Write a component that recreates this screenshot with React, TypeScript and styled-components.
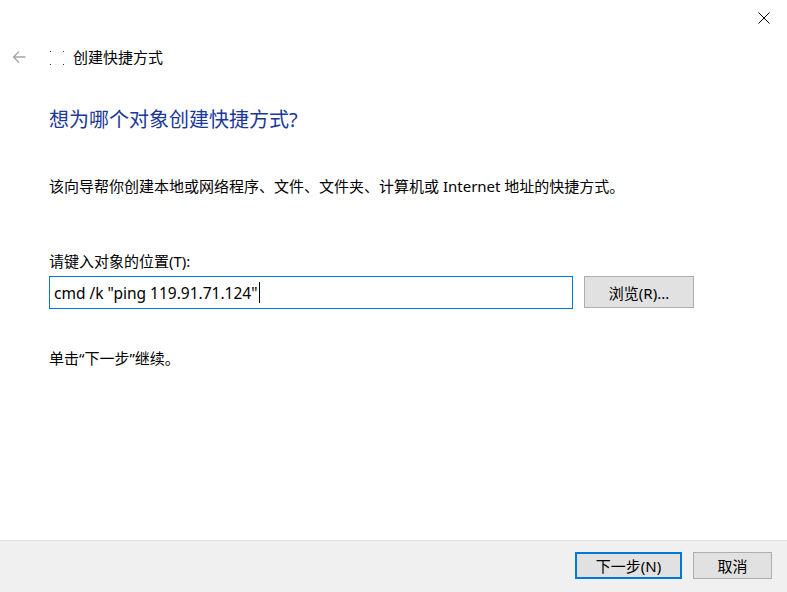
import React from "react";
import styled, { createGlobalStyle } from "styled-components";

const GlobalStyle = createGlobalStyle`
  html, body {
    margin: 0;
    padding: 0;
    background: #ffffff;
  }
  body {
    font-family: "Noto Sans", "Noto Sans CJK SC", sans-serif;
    color: #000000;
  }
`;

const Window = styled.div`
  width: 787px;
  height: 592px;
  display: flex;
  flex-direction: column;
  background: #ffffff;
  overflow: hidden;
`;

const TitleBar = styled.div`
  height: 44px;
  display: flex;
  justify-content: flex-end;
  align-items: flex-start;
`;

const CloseButton = styled.div`
  width: 46px;
  height: 36px;
  display: flex;
  align-items: center;
  justify-content: center;
`;

const NavRow = styled.div`
  height: 26px;
  display: flex;
  align-items: center;
  padding-left: 12px;
`;

const BackArrow = styled.div`
  width: 14px;
  height: 14px;
  display: flex;
  margin-right: 23px;
`;

const AppIcon = styled.div`
  width: 16px;
  height: 16px;
  margin-right: 8px;
`;

const WindowTitle = styled.span`
  font-size: 15px;
  line-height: 20px;
  color: #000000;
`;

const Content = styled.div`
  padding-left: 49px;
  display: flex;
  flex-direction: column;
  align-items: flex-start;
`;

const Heading = styled.h1`
  margin: 36px 0 0;
  font-size: 20px;
  font-weight: 400;
  line-height: 28px;
  color: #1a3799;
`;

const Text = styled.p<{ $top: number }>`
  margin: ${(p) => p.$top}px 0 0;
  font-size: 15px;
  line-height: 20px;
  color: #000000;
`;

const InputRow = styled.div`
  margin-top: 5px;
  display: flex;
  align-items: flex-start;
  gap: 11px;
`;

const Field = styled.div`
  box-sizing: border-box;
  width: 524px;
  height: 33px;
  border: 1px solid #0078d7;
  display: flex;
  align-items: center;
  padding-left: 4px;
  font-size: 15.5px;
  white-space: pre;
`;

const Caret = styled.span`
  display: inline-block;
  width: 1px;
  height: 21px;
  background: #000000;
  margin-left: 1px;
`;

const Button = styled.button<{ $primary?: boolean; $w: number; $h: number }>`
  box-sizing: border-box;
  width: ${(p) => p.$w}px;
  height: ${(p) => p.$h}px;
  background: #e1e1e1;
  border: ${(p) => (p.$primary ? "2px solid #0078d7" : "1px solid #adadad")};
  font-family: inherit;
  font-size: 15px;
  color: #000000;
  padding: 0;
  display: flex;
  align-items: center;
  justify-content: center;
`;

const Footer = styled.div`
  margin-top: auto;
  height: 52px;
  box-sizing: border-box;
  background: #f0f0f0;
  border-top: 1px solid #dfdfdf;
  display: flex;
  justify-content: flex-end;
  align-items: flex-start;
  padding: 11px 15px 0 0;
  gap: 11px;
`;

export default function App() {
  return (
    <Window>
      <GlobalStyle />
      <TitleBar>
        <CloseButton>
          <svg width="12" height="12" viewBox="0 0 12 12">
            <path d="M0.5 0.5 L11.5 11.5 M11.5 0.5 L0.5 11.5" stroke="#000" strokeWidth="1" />
          </svg>
        </CloseButton>
      </TitleBar>
      <NavRow>
        <BackArrow>
          <svg width="14" height="14" viewBox="0 0 14 14">
            <path d="M13.5 7 H1.5 M7 1.5 L1.5 7 L7 12.5" stroke="#a6a6a6" strokeWidth="1.3" fill="none" />
          </svg>
        </BackArrow>
        <AppIcon>
          <svg width="16" height="16" viewBox="0 0 16 16">
            <rect x="1" y="1" width="1" height="1" fill="#333" />
            <rect x="14" y="1" width="1" height="1" fill="#333" />
            <rect x="1" y="14" width="1" height="1" fill="#333" />
            <rect x="14" y="14" width="1" height="1" fill="#333" />
          </svg>
        </AppIcon>
        <WindowTitle>创建快捷方式</WindowTitle>
      </NavRow>
      <Content>
        <Heading>想为哪个对象创建快捷方式?</Heading>
        <Text $top={42}>该向导帮你创建本地或网络程序、文件、文件夹、计算机或 Internet 地址的快捷方式。</Text>
        <Text $top={55}>请键入对象的位置(T):</Text>
        <InputRow>
          <Field>
            cmd /k "ping 119.91.71.124"
            <Caret />
          </Field>
          <Button $w={110} $h={32}>浏览(R)...</Button>
        </InputRow>
        <Text $top={39}>单击“下一步”继续。</Text>
      </Content>
      <Footer>
        <Button $primary $w={107} $h={27}>下一步(N)</Button>
        <Button $w={79} $h={27}>取消</Button>
      </Footer>
    </Window>
  );
}
